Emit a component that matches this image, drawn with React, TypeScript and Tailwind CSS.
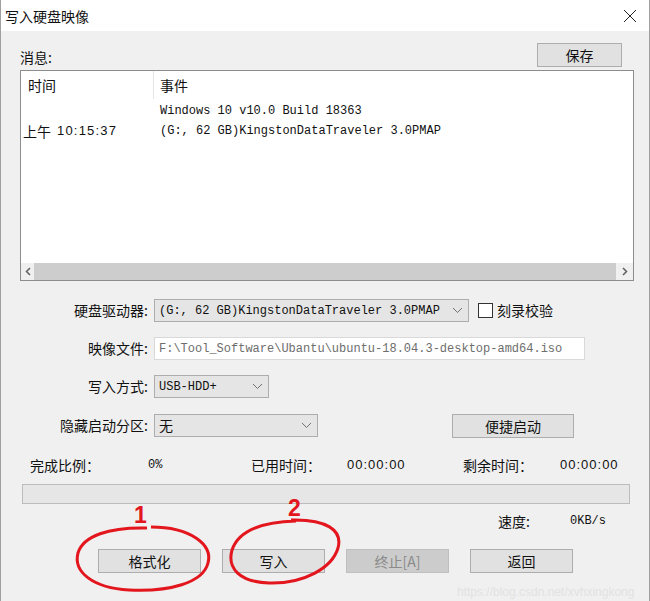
import React from "react";

const Chevron = () => (
  <svg width="11" height="7" viewBox="0 0 11 7">
    <polyline points="1,1 5.5,5.5 10,1" fill="none" stroke="#707070" strokeWidth="1" />
  </svg>
);

function Select({ w, children, cjk }: { w: string; children: React.ReactNode; cjk?: boolean }) {
  return (
    <div
      className={`${w} h-[23px] flex items-center justify-between border border-[#adadad] bg-[#e5e5e5] pl-[4px] pr-[5px] ${
        cjk ? "font-['Noto_Sans_CJK_SC',sans-serif] text-[14px]" : "font-['Liberation_Mono',monospace] text-[12px]"
      } text-[#111]`}
    >
      <span className="whitespace-nowrap">{children}</span>
      <Chevron />
    </div>
  );
}

function Btn({ w, children, disabled }: { w: string; children: React.ReactNode; disabled?: boolean }) {
  return (
    <div
      className={`${w} h-[24px] flex items-center justify-center border ${
        disabled ? "border-[#bfbfbf] bg-[#cccccc] text-[#8a8a8a]" : "border-[#adadad] bg-[#e1e1e1] text-[#111]"
      } text-[14px]`}
    >
      {children}
    </div>
  );
}

function Label({ children }: { children: React.ReactNode }) {
  return <div className="w-[128px] text-right text-[14px] text-[#111] whitespace-nowrap">{children}</div>;
}

export default function App() {
  return (
    <div className="relative w-[650px] h-[601px] overflow-hidden bg-[#f0f0f0] border-x border-[#a0a0a0] font-['Noto_Sans_CJK_SC',sans-serif] text-[#111]">
      {/* Title bar */}
      <div className="h-[31px] bg-white flex items-center justify-between pl-[4px] pr-[12px]">
        <span className="text-[14px] leading-none">写入硬盘映像</span>
        <svg width="14" height="14" viewBox="0 0 14 14">
          <line x1="1" y1="1" x2="13" y2="13" stroke="#222" strokeWidth="1" />
          <line x1="13" y1="1" x2="1" y2="13" stroke="#222" strokeWidth="1" />
        </svg>
      </div>

      <div className="pl-[19px] pr-[15px] pt-[13px] flex flex-col">
        {/* message header */}
        <div className="flex items-center justify-between h-[22px] pr-[12px]">
          <span className="text-[14px] leading-none mt-[4px]">消息:</span>
          <Btn w="w-[85px]">保存</Btn>
        </div>

        {/* list */}
        <div className="mt-[4px] w-[614px] h-[211px] border border-[#8d8d8d] bg-white flex flex-col">
          <div className="h-[28px] flex text-[14px]">
            <div className="w-[133px] pl-[7px] flex items-center border-r border-[#e5e5e5]">时间</div>
            <div className="pl-[6px] flex items-center">事件</div>
          </div>
          <div className="flex flex-col mt-[2px]">
            <div className="h-[20px] flex items-center">
              <div className="w-[139px]" />
              <div className="font-['Liberation_Mono',monospace] text-[12px] whitespace-nowrap">Windows 10 v10.0 Build 18363</div>
            </div>
            <div className="h-[20px] flex items-center">
              <div className="w-[139px] pl-[2px] text-[14px] whitespace-nowrap flex items-center">
                <span>上午</span>
                <span className="ml-[6px] font-['Liberation_Sans',sans-serif] text-[13px] tracking-[1.2px]">10:15:37</span>
              </div>
              <div className="font-['Liberation_Mono',monospace] text-[12px] whitespace-nowrap">(G:, 62 GB)KingstonDataTraveler 3.0PMAP</div>
            </div>
          </div>
          <div className="flex-1" />
          <div className="h-[17px] flex items-stretch bg-[#f0f0f0]">
            <div className="w-[13px] flex items-center justify-center">
              <svg width="6" height="9" viewBox="0 0 6 9">
                <polyline points="5,1 1.5,4.5 5,8" fill="none" stroke="#606060" strokeWidth="1.5" />
              </svg>
            </div>
            <div className="flex-1 bg-[#cdcdcd]" />
            <div className="w-[17px] flex items-center justify-center">
              <svg width="6" height="9" viewBox="0 0 6 9">
                <polyline points="1,1 4.5,4.5 1,8" fill="none" stroke="#606060" strokeWidth="1.5" />
              </svg>
            </div>
          </div>
        </div>

        {/* form */}
        <div className="mt-[18px] flex flex-col gap-[15px]">
          <div className="flex items-center h-[23px]">
            <Label>硬盘驱动器:</Label>
            <div className="ml-[6px]">
              <Select w="w-[315px]">(G:, 62 GB)KingstonDataTraveler 3.0PMAP</Select>
            </div>
            <div className="ml-[9px] w-[15px] h-[15px] border border-[#333] bg-white" />
            <span className="ml-[4px] text-[14px]">刻录校验</span>
          </div>
          <div className="flex items-center h-[23px]">
            <Label>映像文件:</Label>
            <div className="ml-[6px] w-[431px] h-[23px] border border-[#d9d9d9] bg-white flex items-center pl-[4px] font-['Liberation_Mono',monospace] text-[12px] text-[#6d6d6d] whitespace-nowrap">
              F:\Tool_Software\Ubantu\ubuntu-18.04.3-desktop-amd64.iso
            </div>
          </div>
          <div className="flex items-center h-[23px]">
            <Label>写入方式:</Label>
            <div className="ml-[6px]">
              <Select w="w-[115px]">USB-HDD+</Select>
            </div>
          </div>
          <div className="flex items-center h-[24px]">
            <Label>隐藏启动分区:</Label>
            <div className="ml-[6px]">
              <Select w="w-[164px]" cjk>
                无
              </Select>
            </div>
            <div className="ml-[134px] mt-[2px]">
              <Btn w="w-[122px]">便捷启动</Btn>
            </div>
          </div>
        </div>

        {/* stats */}
        <div className="mt-[18px] h-[20px] flex items-center pl-[10px] whitespace-nowrap">
          <div className="w-[118px] text-[14px]">完成比例：</div>
          <div className="w-[103px] font-['Liberation_Mono',monospace] text-[12px]">0%</div>
          <div className="w-[96px] text-[14px]">已用时间：</div>
          <div className="w-[116px] font-['Liberation_Sans',sans-serif] text-[13px] tracking-[1px]">00:00:00</div>
          <div className="w-[97px] text-[14px]">剩余时间：</div>
          <div className="font-['Liberation_Sans',sans-serif] text-[13px] tracking-[1px]">00:00:00</div>
        </div>

        {/* progress */}
        <div className="mt-[9px] ml-[2px] w-[608px] h-[20px] border border-[#bcbcbc] bg-[#e6e6e6]" />

        {/* speed */}
        <div className="mt-[7px] h-[20px] flex items-center pl-[478px] whitespace-nowrap">
          <div className="w-[72px] text-[14px]">速度:</div>
          <div className="font-['Liberation_Mono',monospace] text-[12px]">0KB/s</div>
        </div>

        {/* buttons */}
        <div className="mt-[18px] flex gap-[21px] pl-[78px]">
          <Btn w="w-[103px]">格式化</Btn>
          <Btn w="w-[103px]">写入</Btn>
          <Btn w="w-[103px]" disabled>
            终止[A]
          </Btn>
          <Btn w="w-[103px]">返回</Btn>
        </div>
      </div>

      {/* annotations overlay */}
      <svg className="absolute inset-0 pointer-events-none" width="650" height="601" viewBox="0 0 650 601">
        <path
          d="M 150 527 C 190 527, 212 545, 207 563 C 202 583, 168 592, 128 590 C 92 588, 72 572, 77 553 C 82 536, 108 527, 146 528"
          fill="none"
          stroke="#e3161e"
          strokeWidth="3"
        />
        <path
          d="M 290 520 C 325 519, 342 530, 337 548 C 331 568, 303 584, 268 583 C 238 582, 226 568, 231 550 C 237 532, 258 522, 295 521"
          fill="none"
          stroke="#e3161e"
          strokeWidth="3"
        />
      </svg>
      <div className="absolute left-[133px] top-[504px] text-[23px] font-bold leading-none text-[#e3161e] font-['Liberation_Sans',sans-serif]">1</div>
      <div className="absolute left-[287px] top-[497px] text-[23px] font-bold leading-none text-[#e3161e] font-['Liberation_Sans',sans-serif]">2</div>
      <div className="absolute left-[456px] top-[583px] text-[12px] text-[#e2e2e2] font-['Liberation_Sans',sans-serif] whitespace-nowrap">
        https://blog.csdn.net/xvhxingkong
      </div>
    </div>
  );
}
